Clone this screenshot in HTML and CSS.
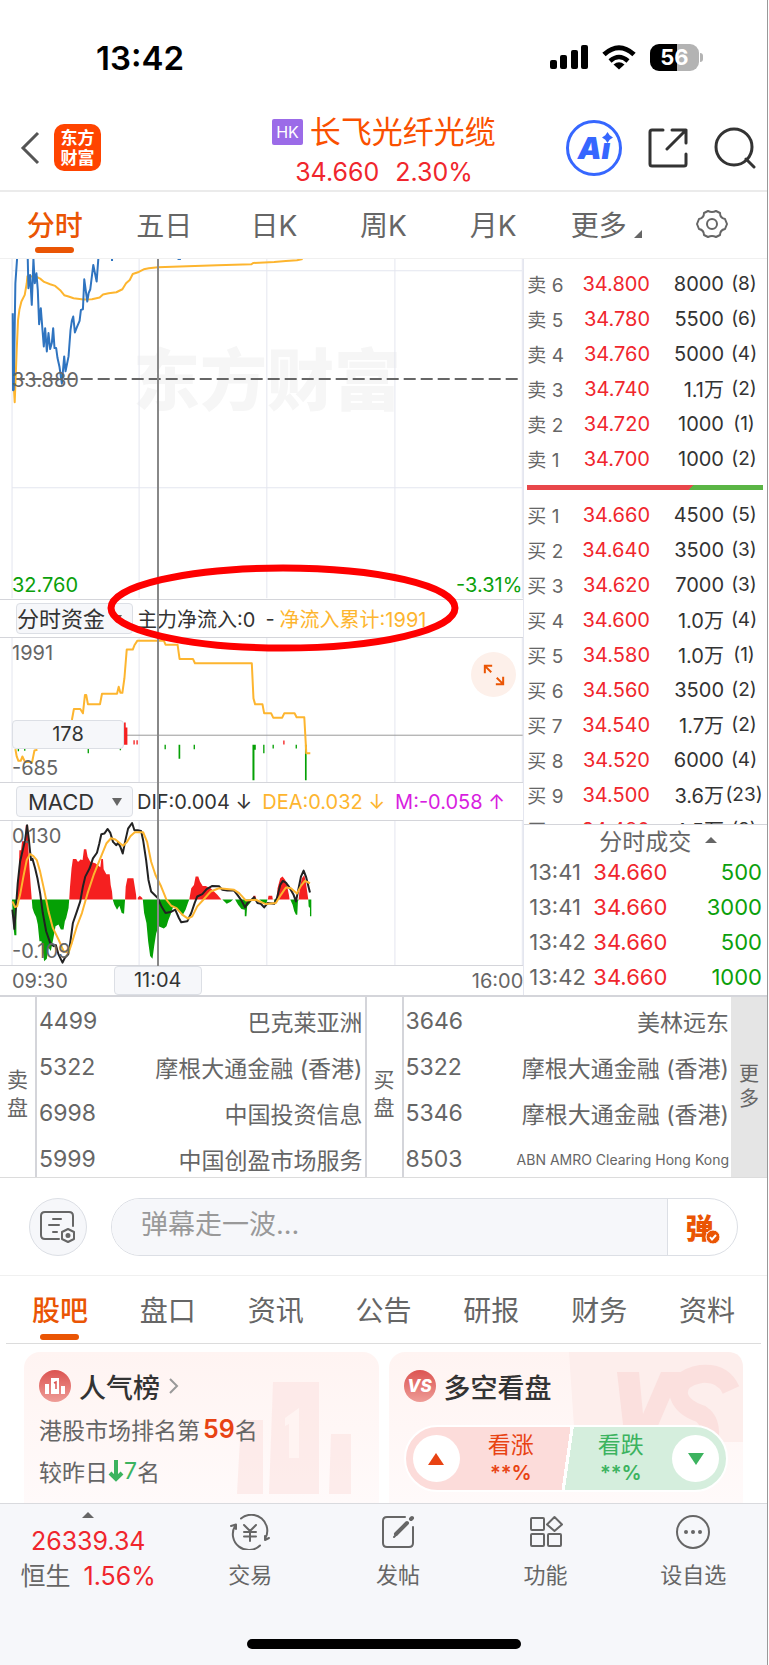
FILE: index.html
```html
<!DOCTYPE html>
<html lang="zh-CN">
<head>
    <meta charset="UTF-8">
    <meta name="viewport" content="width=device-width, initial-scale=1.0">
    <title>长飞光纤光缆</title>
    <link rel="stylesheet" href="styles.css">
</head>
<body>

    <!-- Status bar -->
    <div class="status-bar">
        <span class="clock">13:42</span>
        <div class="status-icons">
            <svg width="38" height="25" viewBox="0 0 38 25">
                <rect x="0" y="15" width="7" height="9" rx="2"/>
                <rect x="10" y="10" width="7" height="14" rx="2"/>
                <rect x="21" y="5" width="7" height="19" rx="2"/>
                <rect x="31" y="0" width="7" height="24" rx="2"/>
            </svg>
            <svg width="34" height="25" viewBox="0 0 34 25">
                <path d="M2 9.500Q17 -4 32 9.500" fill="none" stroke="#000" stroke-width="5"/>
                <path d="M8 16Q17 8 26 16" fill="none" stroke="#000" stroke-width="4.500"/>
                <path d="M17 24.500L11.500 19.500Q17 15 22.500 19.500Z"/>
            </svg>
            <div class="battery">56</div>
        </div>
    </div>

    <!-- Header -->
    <header class="header">
        <div class="header-side">
            <button class="icon-btn" aria-label="返回">
                <svg width="20" height="34" viewBox="0 0 20 34"><path d="M18 2L3 17L18 32" fill="none" stroke="#555" stroke-width="3"/></svg>
            </button>
            <a class="logo" href="#">东方<br>财富</a>
        </div>
        <div class="header-title">
            <h1><span class="hk-badge">HK</span>长飞光纤光缆</h1>
            <p><span>34.660</span><span>2.30%</span></p>
        </div>
        <div class="header-side header-right">
            <button class="icon-btn ai-btn" aria-label="Ai">Ai<svg class="ai-star" width="11" height="11" viewBox="0 0 10 10"><path d="M5 0L7 3L10 5L7 7L5 10L3 7L0 5L3 3Z" fill="#3667ff"/></svg></button>
            <button class="icon-btn" aria-label="分享">
                <svg width="40" height="40" viewBox="0 0 40 40" fill="none" stroke="#333" stroke-width="3" stroke-linecap="round" stroke-linejoin="round">
                    <path d="M15 2H4Q2 2 2 4V36Q2 38 4 38H36Q38 38 38 36V26"/>
                    <path d="M24 2H38V15M38 2L19 21"/>
                </svg>
            </button>
            <button class="icon-btn" aria-label="搜索">
                <svg width="42" height="42" viewBox="0 0 42 42" fill="none" stroke="#333" stroke-width="3" stroke-linecap="round">
                    <circle cx="20" cy="20" r="18"/><path d="M32 32L40 40"/>
                </svg>
            </button>
        </div>
    </header>

    <!-- Chart period tabs -->
    <nav class="tabs period-tabs">
        <a class="active" href="#">分时</a>
        <a href="#">五日</a>
        <a href="#">日K</a>
        <a href="#">周K</a>
        <a href="#">月K</a>
        <a class="more" href="#">更多</a>
        <a href="#" aria-label="设置">
            <svg width="32" height="30" viewBox="0 0 32 30" fill="none" stroke="#666" stroke-width="2">
                <path d="M12 2Q16 4 20 2L24 4Q24 9 29 10L31 15L29 20Q24 21 24 26L20 28Q16 26 12 28L8 26Q8 21 3 20L1 15L3 10Q8 9 8 4Z" stroke-linejoin="round"/>
                <circle cx="16" cy="15" r="5"/>
            </svg>
        </a>
    </nav>

    <main class="quote">
        <!-- Charts -->
        <section class="charts">
            <div class="chart price-chart">
                <span class="watermark">东方财富</span>
                <svg viewBox="0 27 1565 1023" preserveAspectRatio="none">
                    <path class="grid" d="M36 27V1048M416 27V1048M798 27V1048M1181 27V1048M1562 27V1048M36 62H1563M36 715H1563"/>
                    <path class="dash" d="M38 388H1563"/>
                    <polyline class="line orange" points="40,388 44,458 50,300 54,210 58,180 64,155 74,135 80,100 82,79 108,80 120,86 132,96 150,103 165,108 180,121 192,136 205,140 220,145 250,149 275,148 298,143 308,134 325,130 348,127 366,118 377,100 388,90 397,72 415,66 430,58 445,55 472,52 560,49 650,46 752,43 757,39 820,36 855,33 888,31 905,27"/>
                    <polyline class="line blue" points="38,190 39,422 41,420 46,100 51,27"/>
                    <polyline class="line blue" points="83,27 85,115 90,75 95,165 100,27 104,100 109,70 113,120 117,223 122,175 127,240 131,290 135,235 140,305 145,250 150,298 155,280 159,235 163,295 168,295 172,325 178,352 185,402 192,320 196,365 205,320 211,240 215,212 219,200 224,248 230,232 238,213 242,180 248,178 252,88 261,155 265,130 270,118 279,45 289,95 294,27"/>
                    <path class="line blue" d="M335 27V33M531 27H541"/>
                </svg>
                <span class="axis axis-middle">33.880</span>
                <span class="axis axis-low fall">32.760</span>
                <span class="axis axis-low axis-right fall">-3.31%</span>
            </div>

            <div class="indicator">
                <span class="picker"><select aria-label="指标一"><option>分时资金</option></select></span>
                <span>主力净流入:0</span><span>-</span><span class="c-orange inflow">净流入累计:1991</span>
            </div>
            <div class="chart flow-chart">
                <svg viewBox="0 143 1565 434" preserveAspectRatio="none">
                    <path class="grid" d="M36 143V577M416 143V577M798 143V577M1181 143V577M1562 143V577"/>
                    <path class="cross" d="M36 436H1563"/>
                    <path class="bar-up" d="M371 398h5v67h-5zM376 413h5v52h-5zM399 451h4v13h-4zM408 451h4v13h-4zM847 452h4v12h-4z"/>
                    <path class="bar-down" d="M492 465h4v13h-4zM534 465h5v42h-5zM579 465h4v13h-4zM755 465h6v107h-6zM761 465h4v15h-4zM787 465h4v25h-4zM815 465h4v11h-4zM884 465h4v11h-4zM912 465h5v107h-5zM262 476h4v14h-4zM358 474h4v7h-4zM53 474h4v10h-4zM72 474h4v9h-4z"/>
                    <polyline class="line orange" points="46,478 50,500 55,513 62,513 67,500 75,517 96,517 103,482 112,480"/>
                    <polyline class="line orange" points="215,390 221,357 240,357 248,370 254,315 258,315 263,343 299,343 305,311 350,311 355,290 360,308 366,308 372,265 379,178 397,178 402,165 411,151 490,151 495,163 531,163 537,206 577,206 583,219 753,219 758,325 763,343 785,343 790,370 811,370 817,383 844,383 850,370 881,370 887,382 910,382 916,490 928,490"/>
                </svg>
                <span class="axis axis-high">1991</span>
                <span class="axis axis-low">-685</span>
                <span class="tag flow-tag">178</span>
                <button class="expand" aria-label="全屏">
                    <svg viewBox="0 0 24 24" fill="none" stroke="#ea5504" stroke-width="2">
                        <path d="M2 10V2H10M2 2L9 9M22 14V22H14M22 22L15 15"/>
                    </svg>
                </button>
            </div>

            <div class="indicator">
                <span class="picker"><select aria-label="指标二"><option>MACD</option></select></span>
                <span>DIF:0.004 ↓</span><span class="c-orange">DEA:0.032 ↓</span><span class="c-purple">M:-0.058 ↑</span>
            </div>
            <div class="chart macd-chart">
                <svg viewBox="0 122 1565 435" preserveAspectRatio="none">
                    <path class="grid" d="M36 122V557M416 122V557M798 122V557M1181 122V557M1562 122V557"/>
                    <path class="bar-up" d="M50 359L53 300L56 285L58 210H63L66 183H75L77 135H84V190L88 262L92 320L95 359Z
                        M207 359L209 325L214 265L218 237H228L232 244H236L240 238L247 240L251 207H258L262 230L270 245L285 250L300 262L303 237H308L310 268L318 283H328L331 315L335 335L337 359Z
                        M374 359L376 320L381 295H399L403 320L407 345L408 359Z M412 359V354L418 348L425 354L427 359Z
                        M566 359L572 325L580 315L585 290H593L598 305L606 318H615L630 325L640 335L650 345L662 359Z
                        M755 359L758 348H764L766 359Z M801 359L803 348H814L816 359Z
                        M828 359L830 325L838 295L845 290L853 300L858 315L864 345L866 359Z M893 359L897 320L903 295L910 285L915 310L920 345L922 359Z"/>
                    <path class="bar-down" d="M36 359L40 440L43 467H49V359Z
                        M95 359L97 385L102 400L108 412L113 435L118 485H124L128 515L132 546L140 538L145 505L152 515L160 475L166 440L175 435L182 450H190L194 425L198 415L205 385L207 359Z
                        M337 359L342 375L350 390L357 378L364 400L371 402L374 359Z
                        M427 359L431 400L438 430L443 485L449 530L456 538L461 500L467 462L474 440L490 447L498 440L504 420L510 405L518 380L530 390L545 408L555 390L562 370L566 359Z
                        M665 359L678 372L690 366L697 359Z M703 359L712 375L722 388L732 390V410H737L739 380L748 370L753 359Z
                        M775 359L795 375L800 359Z M818 359L824 368L828 359Z M868 359L875 375L880 395L885 405H889L891 365L893 359Z M922 359L923 380L927 385V410H931V359Z"/>
                    <polyline class="line black" points="37,390 43,448 48,380 53,310 60,245 68,210 75,180 81,135 86,175 90,215 93,240 97,236 105,265 112,295 120,340 128,400 138,455 150,490 160,500 167,497 175,525 187,550 194,535 204,525 210,490 218,430 230,395 240,365 248,320 255,290 268,265 278,235 290,218 297,190 303,162 312,160 322,146 330,158 338,185 348,195 353,188 360,200 367,220 374,185 383,145 395,128 402,150 412,150 422,152 428,180 437,240 444,300 452,335 462,345 472,355 484,382 495,400 510,397 524,390 535,415 542,428 560,425 572,400 582,370 590,350 605,343 618,328 635,318 655,319 665,330 680,332 700,332 710,345 722,362 733,383 740,370 750,362 760,352 770,370 780,372 790,383 800,370 820,372 828,355 838,315 846,303 855,308 865,322 878,345 885,365 893,325 900,290 908,272 915,290 920,310 927,338"/>
                    <polyline class="line orange" points="37,365 45,382 51,380 60,345 70,290 80,240 90,222 100,228 110,240 120,275 132,330 145,395 158,445 175,480 190,515 205,520 215,490 230,440 245,400 262,340 280,285 300,235 318,190 332,174 345,178 368,197 380,185 390,168 403,156 428,156 440,185 452,245 465,285 482,320 498,360 512,378 528,385 545,405 562,417 575,410 590,380 608,360 630,335 655,325 700,330 715,340 735,362 765,360 795,373 825,370 840,345 855,323 870,325 888,341 900,318 912,303 927,310"/>
                </svg>
                <span class="axis axis-high">0.130</span>
                <span class="axis axis-low">-0.109</span>
            </div>

            <div class="time-axis">
                <span>09:30</span>
                <span class="tag time-tag">11:04</span>
                <span>16:00</span>
            </div>

            <div class="crosshair"></div>
            <svg class="marker" viewBox="0 0 352 90"><ellipse cx="176" cy="45" rx="172" ry="40" fill="none" stroke="#fe0000" stroke-width="7"/></svg>
        </section>

        <!-- Order book -->
        <section class="book">
            <div class="levels">
                <table>
                    <tr><th>卖 6</th><td class="rise">34.800</td><td>8000</td><td>(8)</td></tr>
                    <tr><th>卖 5</th><td class="rise">34.780</td><td>5500</td><td>(6)</td></tr>
                    <tr><th>卖 4</th><td class="rise">34.760</td><td>5000</td><td>(4)</td></tr>
                    <tr><th>卖 3</th><td class="rise">34.740</td><td>1.1万</td><td>(2)</td></tr>
                    <tr><th>卖 2</th><td class="rise">34.720</td><td>1000</td><td>(1)</td></tr>
                    <tr><th>卖 1</th><td class="rise">34.700</td><td>1000</td><td>(2)</td></tr>
                </table>
                <div class="ratio"></div>
                <table>
                    <tr><th>买 1</th><td class="rise">34.660</td><td>4500</td><td>(5)</td></tr>
                    <tr><th>买 2</th><td class="rise">34.640</td><td>3500</td><td>(3)</td></tr>
                    <tr><th>买 3</th><td class="rise">34.620</td><td>7000</td><td>(3)</td></tr>
                    <tr><th>买 4</th><td class="rise">34.600</td><td>1.0万</td><td>(4)</td></tr>
                    <tr><th>买 5</th><td class="rise">34.580</td><td>1.0万</td><td>(1)</td></tr>
                    <tr><th>买 6</th><td class="rise">34.560</td><td>3500</td><td>(2)</td></tr>
                    <tr><th>买 7</th><td class="rise">34.540</td><td>1.7万</td><td>(2)</td></tr>
                    <tr><th>买 8</th><td class="rise">34.520</td><td>6000</td><td>(4)</td></tr>
                    <tr><th>买 9</th><td class="rise">34.500</td><td>3.6万</td><td>(23)</td></tr>
                    <tr><th>买 10</th><td class="rise">34.480</td><td>4.5万</td><td>(8)</td></tr>
                </table>
            </div>
            <button class="trades-title">分时成交<i class="tri-up"></i></button>
            <table class="trades">
                <tr><th>13:41</th><td class="rise">34.660</td><td class="fall">500</td></tr>
                <tr><th>13:41</th><td class="rise">34.660</td><td class="fall">3000</td></tr>
                <tr><th>13:42</th><td class="rise">34.660</td><td class="fall">500</td></tr>
                <tr><th>13:42</th><td class="rise">34.660</td><td class="fall">1000</td></tr>
            </table>
        </section>
    </main>

    <!-- Brokers -->
    <section class="brokers">
        <div class="side-label">卖<br>盘</div>
        <table>
            <tr><th>4499</th><td>巴克莱亚洲</td></tr>
            <tr><th>5322</th><td>摩根大通金融 (香港)</td></tr>
            <tr><th>6998</th><td>中国投资信息</td></tr>
            <tr><th>5999</th><td>中国创盈市场服务</td></tr>
        </table>
        <div class="side-label">买<br>盘</div>
        <table>
            <tr><th>3646</th><td>美林远东</td></tr>
            <tr><th>5322</th><td>摩根大通金融 (香港)</td></tr>
            <tr><th>5346</th><td>摩根大通金融 (香港)</td></tr>
            <tr><th>8503</th><td class="small">ABN AMRO Clearing Hong Kong</td></tr>
        </table>
        <button class="side-more">更<br>多</button>
    </section>

    <!-- Comment box -->
    <section class="comment">
        <button class="round-btn" aria-label="弹幕设置">
            <svg width="38" height="34" viewBox="0 0 38 34" fill="none" stroke="#666" stroke-width="2" stroke-linecap="round">
                <path d="M20 29H6Q2 29 2 25V6Q2 2 6 2H30Q34 2 34 6V16"/>
                <path d="M14 9H22M10 15H20M14 22H18"/>
                <path d="M29 19L35 22V29L29 32L23 29V22Z" stroke-linejoin="round"/>
                <circle cx="29" cy="25.500" r="1.500" fill="#666"/>
            </svg>
        </button>
        <div class="comment-box">
            <input type="text" placeholder="弹幕走一波..." aria-label="弹幕">
            <button aria-label="弹幕开关"><span class="dan">弹<svg class="dan-check" width="16" height="16" viewBox="0 0 16 16"><circle cx="8" cy="8" r="7" fill="#ea5504" stroke="#fff"/><path d="M5 8L7 10.500L11 6" fill="none" stroke="#fff" stroke-width="2"/></svg></span></button>
        </div>
    </section>

    <!-- Content tabs -->
    <nav class="tabs content-tabs">
        <a class="active" href="#">股吧</a>
        <a href="#">盘口</a>
        <a href="#">资讯</a>
        <a href="#">公告</a>
        <a href="#">研报</a>
        <a href="#">财务</a>
        <a href="#">资料</a>
    </nav>

    <section class="cards">
        <div class="card">
            <svg class="card-art" width="160" height="150" viewBox="0 0 160 150" fill="#fbe3e1">
                <path d="M22 68H44V142H18Z M54 30H100V142H50Z M112 82H132V142H110Z" opacity="0.600"/>
                <path d="M66 66L80 56V106H70V72L66 74Z" fill="#fff4f2"/>
            </svg>
            <h2>
                <svg width="32" height="32" viewBox="0 0 32 32">
                    <defs><linearGradient id="redBadge" x2="0" y2="1"><stop stop-color="#dc5451"/><stop offset="1" stop-color="#ee9c97"/></linearGradient></defs>
                    <circle cx="16" cy="16" r="16" fill="url(#redBadge)"/>
                    <path d="M6 14H10V24H6ZM12 8H20V24H12ZM22 16H26V24H22Z" fill="#fff"/>
                    <path d="M15 13L17 12V19" fill="none" stroke="#dc5451" stroke-width="1.500"/>
                </svg>
                人气榜
                <svg width="12" height="18" viewBox="0 0 12 18"><path d="M2 2L9 9L2 16" fill="none" stroke="#999" stroke-width="2"/></svg>
            </h2>
            <p>港股市场排名第<b>59</b>名</p>
            <p>较昨日<svg width="16" height="22" viewBox="0 0 16 22" fill="none" stroke="#3cb35f" stroke-width="4"><path d="M8 0V19M2 13L8 19L14 13"/></svg><span class="c-green">7</span>名</p>
        </div>
        <div class="card">
            <svg class="card-art" width="180" height="150" viewBox="0 0 180 150">
                <path d="M6 0H164Q180 0 180 16V90H12Z" fill="#fdeeec"/>
                <path d="M54 20H76L80 62L98 20H118L88 90H62Z" fill="#fbe0de"/>
                <path d="M168 38Q160 20 138 22Q114 26 116 44Q120 56 138 62Q150 70 146 90" fill="none" stroke="#fbe0de" stroke-width="18"/>
            </svg>
            <h2><span class="vs-badge">VS</span>多空看盘</h2>
            <div class="vote">
                <button class="vote-up"><span class="dot"><i class="tri up"></i></span><span>看涨<b>**%</b></span></button>
                <button class="vote-down"><span>看跌<b>**%</b></span><span class="dot"><i class="tri down"></i></span></button>
            </div>
        </div>
    </section>

    <!-- Bottom bar -->
    <footer class="bottom">
        <div class="bottom-items">
            <a class="index" href="#">
                <i class="tri-up"></i>
                <span class="rise">26339.34</span>
                <span>恒生 <span class="rise pct">1.56%</span></span>
            </a>
            <a href="#">
                <svg width="40" height="36" viewBox="0 0 40 36" fill="none" stroke="#666" stroke-width="2" stroke-linecap="round" stroke-linejoin="round">
                    <path d="M11 4.500A16 16 0 0 1 35 25M35 22V26L39 24M30 31.500A16 16 0 0 1 5 12M1 12L6 10.500V15"/>
                    <path d="M14 11L20 17L26 11M20 17V27M14 18H26M14 22.500H26"/>
                </svg>
                交易
            </a>
            <a href="#">
                <svg width="36" height="36" viewBox="0 0 36 36" fill="none" stroke="#666" stroke-width="2" stroke-linecap="round">
                    <path d="M25 3H7Q3 3 3 7V29Q3 33 7 33H29Q33 33 33 29V13"/>
                    <path d="M16 20L27 9M31 5L32 4" stroke-width="4"/><path d="M14 23L17 20"/>
                </svg>
                发帖
            </a>
            <a href="#">
                <svg width="36" height="36" viewBox="0 0 36 36" fill="none" stroke="#666" stroke-width="2" stroke-linejoin="round">
                    <rect x="3" y="4" width="13" height="12" rx="1"/><rect x="3" y="20" width="13" height="12" rx="1"/><rect x="20" y="20" width="13" height="12" rx="1"/>
                    <path d="M26.500 3L34 10.500L26.500 17L19 10.500Z"/>
                </svg>
                功能
            </a>
            <a href="#">
                <svg width="36" height="36" viewBox="0 0 36 36" fill="#666">
                    <circle cx="18" cy="18" r="16" fill="none" stroke="#666" stroke-width="2"/>
                    <circle cx="11" cy="18" r="2"/><circle cx="18" cy="18" r="2"/><circle cx="25" cy="18" r="2"/>
                </svg>
                设自选
            </a>
        </div>
        <div class="home-bar"></div>
    </footer>

</body>
</html>
```

FILE: styles.css
```css
* {
    box-sizing: border-box;
}

body {
    margin: 0;
    margin-right: 1px;
    border-right: 1px solid #999;
    background: #fff;
    color: #666;
    font-family: Inter, "Noto Sans CJK SC", sans-serif;
}

h1, h2, p {
    margin: 0;
    font-weight: 400;
}

a {
    color: inherit;
    text-decoration: none;
}

button, input, select {
    margin: 0;
    padding: 0;
    border: none;
    background: none;
    color: inherit;
    font: inherit;
}

svg {
    display: block;
}

table {
    width: 100%;
    border-collapse: collapse;
    table-layout: fixed;
}

th, td {
    padding: 0;
    font-weight: 400;
    text-align: left;
    white-space: nowrap;
}

.rise {
    color: #f0262d;
}

.fall {
    color: #0ba00b;
}

.c-orange {
    color: #fdb52f;
}

.c-purple {
    color: #d81ee0;
}

.c-green {
    color: #3cb35f;
}

/* Status bar */
.status-bar {
    display: flex;
    justify-content: space-between;
    align-items: center;
    height: 115px;
    padding: 0 68px 0 96px;
    color: #000;
}

.clock {
    font-size: 33px;
    font-weight: 600;
}

.status-icons {
    display: flex;
    gap: 14px;
    align-items: center;
}

.battery {
    position: relative;
    width: 49px;
    height: 27px;
    border-radius: 9px;
    background: linear-gradient(90deg, #000 56%, #b3b3b3 56%);
    color: #fff;
    font-size: 22px;
    font-weight: 700;
    line-height: 27px;
    text-align: center;
}

.battery::after {
    content: "";
    position: absolute;
    right: -4px;
    top: 9px;
    width: 3px;
    height: 9px;
    border-radius: 0 3px 3px 0;
    background: #b3b3b3;
}

/* Header */
.header {
    display: flex;
    align-items: center;
    height: 77px;
    padding: 0 11px 10px 20px;
    border-bottom: 2px solid #ebebeb;
}

.header-side {
    display: flex;
    align-items: center;
    flex: 1;
    gap: 14px;
}

.header-right {
    justify-content: flex-end;
    gap: 26px;
}

.logo {
    width: 47px;
    height: 47px;
    padding-top: 4px;
    border-radius: 10px;
    background: #ff4400;
    color: #fff;
    font-size: 17px;
    font-weight: 700;
    line-height: 20px;
    text-align: center;
}

.header-title {
    padding-top: 8px;
    margin-right: 8px;
}

.header-title h1 {
    display: flex;
    align-items: center;
    gap: 7px;
    color: #fa5000;
    font-size: 31px;
    line-height: 40px;
}

.hk-badge {
    padding: 0 4px;
    border-radius: 2px;
    background: #9b6be8;
    color: #fff;
    font-size: 16px;
    line-height: 26px;
}

.header-title p {
    display: flex;
    justify-content: center;
    gap: 16px;
    color: #f0262d;
    font-size: 25px;
    line-height: 40px;
}

.icon-btn {
    display: block;
    cursor: pointer;
}

.ai-btn {
    position: relative;
    width: 56px;
    height: 56px;
    border: 3px solid #3667ff;
    border-radius: 50%;
    color: #3667ff;
    font-size: 30px;
    font-style: italic;
    font-weight: 900;
    line-height: 50px;
}

.ai-star {
    position: absolute;
    top: 9px;
    right: 6px;
    background: #fff;
}

/* Tabs */
.tabs {
    display: flex;
    font-size: 28px;
}

.tabs a {
    position: relative;
    display: flex;
    flex: 1 0 14%;
    justify-content: center;
    align-items: center;
    padding-bottom: 2px;
}

.tabs .active {
    color: #ea5504;
    font-weight: 500;
}

.tabs .active::after {
    content: "";
    position: absolute;
    bottom: 5px;
    width: 39px;
    height: 6px;
    border-radius: 3px;
    background: #ea5504;
}

.period-tabs {
    height: 67px;
    border-bottom: 1px solid #f0f0f0;
}

.period-tabs .more {
    padding-right: 8px;
}

.period-tabs .more::after {
    content: "";
    position: absolute;
    right: 15px;
    bottom: 20px;
    border-bottom: 8px solid #666;
    border-left: 8px solid transparent;
}

/* Quote area */
.quote {
    display: flex;
}

/* Charts */
.charts {
    position: relative;
    flex: 524;
    min-width: 0;
}

.chart {
    position: relative;
    border-bottom: 1px solid #d4d5da;
}

.chart svg {
    position: relative;
    width: 100%;
    height: 100%;
}

.chart path, .chart polyline {
    vector-effect: non-scaling-stroke;
}

.price-chart {
    height: 341px;
}

.flow-chart {
    height: 146px;
    border-top: 1px solid #d4d5da;
}

.macd-chart {
    height: 146px;
    border-top: 1px solid #d4d5da;
}

.grid {
    fill: none;
    stroke: #e4e6ef;
    stroke-width: 1;
}

.dash {
    fill: none;
    stroke: #666;
    stroke-width: 2;
    stroke-dasharray: 12 5;
}

.cross {
    stroke: #999;
    stroke-width: 1;
}

.line {
    fill: none;
    stroke-width: 2;
    stroke-linejoin: round;
}

.line.orange {
    stroke: #fdb52f;
}

.line.blue {
    stroke: #2f74c0;
}

.line.black {
    stroke: #222;
}

.bar-up {
    fill: #f52020;
}

.bar-down {
    fill: #05a005;
}

.watermark {
    position: absolute;
    top: 74px;
    left: 133px;
    color: #f6f6f6;
    font-size: 67px;
    font-weight: 900;
    line-height: 96px;
}

.axis {
    position: absolute;
    left: 12px;
    font-size: 20px;
    line-height: 24px;
}

.axis-high {
    top: 3px;
}

.axis-middle {
    top: 109px;
}

.axis-low {
    bottom: 2px;
}

.axis-right {
    left: auto;
    right: 1px;
}

.indicator {
    display: flex;
    align-items: center;
    gap: 10px;
    height: 37px;
    padding-left: 16px;
    color: #333;
    font-size: 20px;
    white-space: nowrap;
}

.indicator .inflow {
    margin-left: -5px;
}

.picker {
    position: relative;
    margin-right: -6px;
}

.picker select {
    width: 117px;
    height: 31px;
    padding-right: 27px;
    border: 1px solid #dcdfe5;
    border-radius: 4px;
    background: #f6f7fa;
    appearance: none;
    font-size: 22px;
    text-align-last: center;
}

.picker::after {
    content: "";
    position: absolute;
    right: 11px;
    top: 12px;
    border-top: 8px solid #666;
    border-right: 5px solid transparent;
    border-left: 5px solid transparent;
}

.tag {
    border: 1px solid #dcdfe5;
    border-radius: 4px;
    background: #f6f7fa;
    color: #333;
    font-size: 20px;
    line-height: 27px;
    text-align: center;
}

.flow-tag {
    position: absolute;
    left: 12px;
    top: 82px;
    width: 112px;
}

.expand {
    position: absolute;
    right: 7px;
    top: 14px;
    width: 45px;
    height: 45px;
    border-radius: 50%;
    background: #fdf0ea;
}

.expand svg {
    width: 22px;
    height: 22px;
    margin: 0 auto;
}

.time-axis {
    display: flex;
    justify-content: space-between;
    align-items: center;
    height: 29px;
    padding-left: 12px;
    font-size: 20px;
}

.time-tag {
    width: 88px;
    margin-right: 224px;
}

.crosshair {
    position: absolute;
    top: 0;
    bottom: 29px;
    left: 157px;
    width: 2px;
    background: #888;
}

.marker {
    position: absolute;
    left: 107px;
    top: 304px;
    width: 352px;
    height: 90px;
}

/* Order book */
.book {
    display: flex;
    flex-direction: column;
    flex: 243;
    min-width: 0;
    border-left: 1px solid #e4e6ef;
}

.levels {
    height: 566px;
    overflow: hidden;
    padding-top: 7px;
    border-bottom: 1px solid #d4d5da;
}

.levels tr {
    height: 35px;
    color: #333;
    font-size: 20px;
}

.levels th {
    width: 46px;
    padding-left: 3px;
    color: #666;
    font-size: 19px;
}

.levels td {
    text-align: right;
}

.levels td:nth-child(3) {
    width: 74px;
}

.levels td:last-child {
    width: 43px;
    padding-right: 3px;
    font-size: 19px;
    text-align: center;
}

.ratio {
    height: 5px;
    margin: 9px 4px 7px 3px;
    background: linear-gradient(135deg, #e8474a 69%, #5ab545 69%);
}

.trades-title {
    display: flex;
    justify-content: center;
    align-items: center;
    gap: 14px;
    height: 29px;
    padding-left: 25px;
    font-size: 23px;
}

.tri-up {
    border-bottom: 6px solid #666;
    border-right: 6px solid transparent;
    border-left: 6px solid transparent;
}

.trades tr {
    height: 35px;
    font-size: 22px;
}

.trades th {
    width: 69px;
    padding-left: 5px;
}

.trades td:last-child {
    padding-right: 5px;
    text-align: right;
}

/* Brokers */
.brokers {
    display: flex;
    height: 183px;
    border-top: 2px solid #d4d5da;
    border-bottom: 1px solid #dcdcdc;
    overflow: hidden;
}

.brokers table {
    flex: 1;
    width: auto;
    margin-top: 1px;
    font-size: 23px;
}

.brokers tr {
    height: 46px;
}

.brokers th {
    width: 64px;
    padding-left: 2px;
}

.brokers td {
    padding-right: 2px;
    text-align: right;
}

.brokers .small {
    font-size: 14px;
}

.side-label {
    display: flex;
    align-items: center;
    justify-content: center;
    width: 37px;
    padding-top: 14px;
    border-right: 2px solid #d4d5da;
    font-size: 21px;
    line-height: 28px;
}

.brokers table + .side-label {
    width: 39px;
    border-left: 2px solid #d4d5da;
}

.side-more {
    width: 36px;
    background: #e5e5e5;
    font-size: 20px;
    line-height: 25px;
}

/* Comment box */
.comment {
    display: flex;
    gap: 24px;
    align-items: center;
    height: 98px;
    padding: 0 29px;
    border-bottom: 1px solid #f0f0f0;
}

.round-btn {
    display: flex;
    justify-content: center;
    align-items: center;
    width: 58px;
    height: 58px;
    border: 1px solid #dcdfe5;
    border-radius: 50%;
    background: #f6f7fa;
}

.comment-box {
    display: flex;
    flex: 1;
    height: 58px;
    border: 1px solid #dcdfe5;
    border-radius: 29px;
    overflow: hidden;
}

.comment-box input {
    flex: 1;
    min-width: 0;
    padding: 0 29px 4px;
    background: #f6f7fa;
    font-size: 27px;
}

.comment-box input::placeholder {
    color: #999;
}

.comment-box button {
    width: 70px;
    padding-right: 6px;
    border-left: 1px solid #dcdfe5;
}

.dan {
    position: relative;
    color: #ea5504;
    font-size: 28px;
    font-weight: 900;
}

.dan-check {
    position: absolute;
    right: -7px;
    bottom: 1px;
}

/* Content tabs */
.content-tabs {
    height: 68px;
    margin: 0 6px;
    border-bottom: 1px solid #dcdcdc;
}

.content-tabs .active::after {
    bottom: 3px;
}

/* Cards */
.cards {
    display: flex;
    gap: 10px;
    height: 159px;
    padding: 8px 24px 0;
    overflow: hidden;
}

.card {
    position: relative;
    flex: 1;
    padding: 18px 15px 0;
    border-radius: 16px 16px 0 0;
    background: linear-gradient(#fff4f2, #fffafa);
    font-size: 23px;
}

.card-art {
    position: absolute;
    top: 0;
    right: 0;
}

.card h2 {
    position: relative;
    display: flex;
    align-items: center;
    gap: 8px;
    height: 32px;
    margin-bottom: 6px;
    color: #333;
    font-size: 27px;
    font-weight: 500;
}

.card p {
    position: relative;
    display: flex;
    align-items: center;
    height: 42px;
}

.card b {
    font-weight: 600;
}

.card p b {
    margin-left: 3px;
    color: #e84313;
    font-size: 25px;
}

.vs-badge {
    width: 32px;
    border-radius: 50%;
    background: linear-gradient(#dc5451, #ee9c97);
    color: #fff;
    font-size: 17px;
    font-style: italic;
    font-weight: 800;
    line-height: 32px;
    text-align: center;
}

.vote {
    position: relative;
    display: flex;
    height: 67px;
    margin-top: 23px;
    border: 2px solid #fff;
    border-radius: 34px;
    background: linear-gradient(98deg, #fcdcda 50%, #fff 50%, #fff 51%, #d5eedd 51%);
    overflow: hidden;
}

.vote button {
    display: flex;
    flex: 1;
    justify-content: space-between;
    align-items: center;
    padding: 0 7px;
    line-height: 29px;
}

.vote b {
    display: block;
    font-size: 20px;
    line-height: 27px;
}

.vote-up {
    color: #e84313;
}

.vote .vote-up {
    padding-right: 32px;
}

.vote-down {
    color: #3cb35f;
}

.vote .vote-down {
    padding-left: 32px;
}

.dot {
    display: flex;
    justify-content: center;
    align-items: center;
    width: 47px;
    height: 47px;
    border-radius: 50%;
    background: #fff;
}

.tri {
    border-right: 8px solid transparent;
    border-left: 8px solid transparent;
}

.tri.up {
    border-bottom: 12px solid #e84313;
}

.tri.down {
    border-top: 12px solid #3cb35f;
}

/* Bottom bar */
.bottom {
    height: 162px;
    border-top: 1px solid #d9dade;
    background: #f6f7fa;
}

.bottom-items {
    display: flex;
    height: 135px;
}

.bottom-items a {
    display: flex;
    flex: 1;
    flex-direction: column;
    align-items: center;
    gap: 9px;
    padding-top: 10px;
    font-size: 22px;
    line-height: 32px;
}

.bottom-items .index {
    flex: 0 0 23%;
    gap: 3px;
    padding-top: 8px;
    font-size: 25px;
}

.index .tri-up {
    margin-bottom: 4px;
}

.pct {
    margin-left: 6px;
}

.home-bar {
    width: 274px;
    height: 10px;
    margin: 0 auto;
    border-radius: 5px;
    background: #000;
}
```
